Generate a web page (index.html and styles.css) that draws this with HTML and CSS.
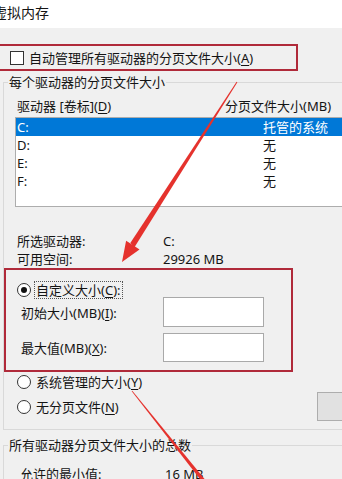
FILE: index.html
```html
<!DOCTYPE html>
<html lang="zh-CN">
<head>
<meta charset="utf-8">
<title>虚拟内存</title>
<link rel="stylesheet" href="styles.css">
</head>
<body>
<div class="page">
  <div class="titlebar"><span class="title">虚拟内存</span></div>

  <div class="hl auto">
    <span class="checkbox"></span>
    <span>自动管理所有驱动器的分页文件大小(<u>A</u>)</span>
  </div>

  <div class="group g1">
    <div class="legend">每个驱动器的分页文件大小</div>
    <div class="head"><span class="h1">驱动器 [卷标](<u>D</u>)</span><span>分页文件大小(MB)</span></div>
    <div class="list">
      <div class="row sel"><span class="c1">C:</span><span>托管的系统</span></div>
      <div class="row"><span class="c1">D:</span><span>无</span></div>
      <div class="row"><span class="c1">E:</span><span>无</span></div>
      <div class="row"><span class="c1">F:</span><span>无</span></div>
    </div>
    <div class="info i1"><span class="k">所选驱动器:</span><span>C:</span></div>
    <div class="info"><span class="k">可用空间:</span><span>29926 MB</span></div>

    <div class="hl custom">
      <div class="radio-row"><span class="radio on"></span><span class="focus">自定义大小(<u>C</u>):</span></div>
      <div class="field"><span class="fl">初始大小(MB)(<u>I</u>):</span><span class="input"></span></div>
      <div class="field f2"><span class="fl">最大值(MB)(<u>X</u>):</span><span class="input"></span></div>
    </div>

    <div class="opt"><span class="radio"></span><span>系统管理的大小(<u>Y</u>)</span></div>
    <div class="opt opt2">
      <span class="optlabel"><span class="radio"></span><span>无分页文件(<u>N</u>)</span></span>
      <span class="btn"></span>
    </div>
  </div>

  <div class="group g2">
    <div class="legend">所有驱动器分页文件大小的总数</div>
    <div class="min"><span class="k">允许的最小值:</span><span>16 MB</span></div>
  </div>

  <svg class="arrows" width="342" height="479" viewBox="0 0 342 479" aria-hidden="true">
    <polygon points="237.4,82.3 134.5,247.2 130.3,242.9 236.6,81.7" fill="#e5322d"/>
    <polygon points="122,262 126.1,240.8 132.8,245.1 139.5,249.4" fill="#e5322d"/>
    <polygon points="132.3,390.75 212.6,488.8 209.4,491.2 131.7,391.25" fill="#e5322d"/>
  </svg>
</div>
</body>
</html>
```

FILE: styles.css
```css
html, body {
  margin: 0;
  padding: 0;
}

.page {
  width: 342px;
  height: 479px;
  overflow: hidden;
  position: relative;
  background: #f0f0f0;
  font-family: "Noto Sans", "Noto Sans CJK SC", sans-serif;
  font-size: 13px;
  color: #141414;
}

u {
  text-decoration-thickness: 1px;
  text-underline-offset: 2px;
}

.titlebar {
  height: 28px;
  background: #fff;
  line-height: 26px;
  font-size: 14px;
}

.title {
  display: inline-block;
  margin-left: -7px;
}

.hl {
  border: 2px solid #b02a3a;
  box-sizing: border-box;
}

.auto {
  margin: 16px 0 0 -2px;
  width: 300px;
  height: 27px;
  display: flex;
  align-items: center;
  padding-left: 10px;
  gap: 5px;
  line-height: 18px;
}

.checkbox {
  width: 14px;
  height: 14px;
  box-sizing: border-box;
  border: 1px solid #333;
  background: #fff;
  flex: none;
}

.group {
  border: 1px solid #d9d9d9;
  border-right: none;
  margin-left: 3px;
  margin-right: -20px;
}

.g1 {
  margin-top: 11px;
  padding-bottom: 8px;
}

.g2 {
  margin-top: 15px;
  height: 60px;
}

.legend {
  margin: -10px 0 0 4px;
  padding: 0 1px;
  line-height: 18px;
  background: #f0f0f0;
  width: fit-content;
}

.head {
  display: flex;
  margin-top: 6px;
  line-height: 18px;
  padding-left: 13px;
}

.h1 {
  width: 208px;
  flex: none;
}

.list {
  margin: 2px 0 0 11px;
  height: 90px;
  box-sizing: border-box;
  border: 1px solid #adadad;
  background: #fff;
}

.row {
  display: flex;
  line-height: 18px;
  padding-left: 1px;
}

.c1 {
  width: 246px;
  flex: none;
}

.sel {
  background: #0078d7;
  color: #fff;
}

.info {
  display: flex;
  line-height: 18px;
  padding-left: 13px;
}

.i1 {
  margin-top: 25px;
}

.k {
  width: 146px;
  flex: none;
}

.custom {
  width: 289px;
  height: 104px;
  padding-top: 11px;
}

.radio-row {
  display: flex;
  align-items: center;
  height: 18px;
  padding-left: 11px;
}

.radio {
  width: 14px;
  height: 14px;
  border-radius: 50%;
  border: 1px solid #333;
  background: #fff;
  box-sizing: border-box;
  display: flex;
  align-items: center;
  justify-content: center;
  flex: none;
}

.radio.on::after {
  content: "";
  width: 6px;
  height: 6px;
  border-radius: 50%;
  background: #111;
}

.focus {
  margin-left: 3px;
  border: 1px dotted #555;
  padding: 0 1px;
  line-height: 16px;
}

.field {
  display: flex;
  align-items: center;
  margin-top: -2px;
  padding-left: 15px;
  height: 30px;
}

.f2 {
  margin-top: 6px;
  height: 29px;
}

.fl {
  width: 142px;
  flex: none;
}

.input {
  width: 101px;
  height: 100%;
  box-sizing: border-box;
  border: 1px solid #a9a9a9;
  background: #fff;
  flex: none;
}

.opt {
  display: flex;
  align-items: center;
  padding-left: 13px;
  gap: 5px;
  line-height: 18px;
  margin-top: 1px;
}

.opt2 {
  height: 29px;
  gap: 0;
}

.optlabel {
  display: flex;
  align-items: center;
  gap: 5px;
  width: 300px;
  flex: none;
}

.btn {
  width: 80px;
  height: 29px;
  box-sizing: border-box;
  border: 1px solid #adadad;
  background: #e1e1e1;
  flex: none;
}

.min {
  display: flex;
  line-height: 18px;
  margin-top: 11px;
  padding-left: 16px;
}

.min .k {
  width: 145px;
}

.arrows {
  position: absolute;
  top: 0;
  left: 0;
  pointer-events: none;
}
```
